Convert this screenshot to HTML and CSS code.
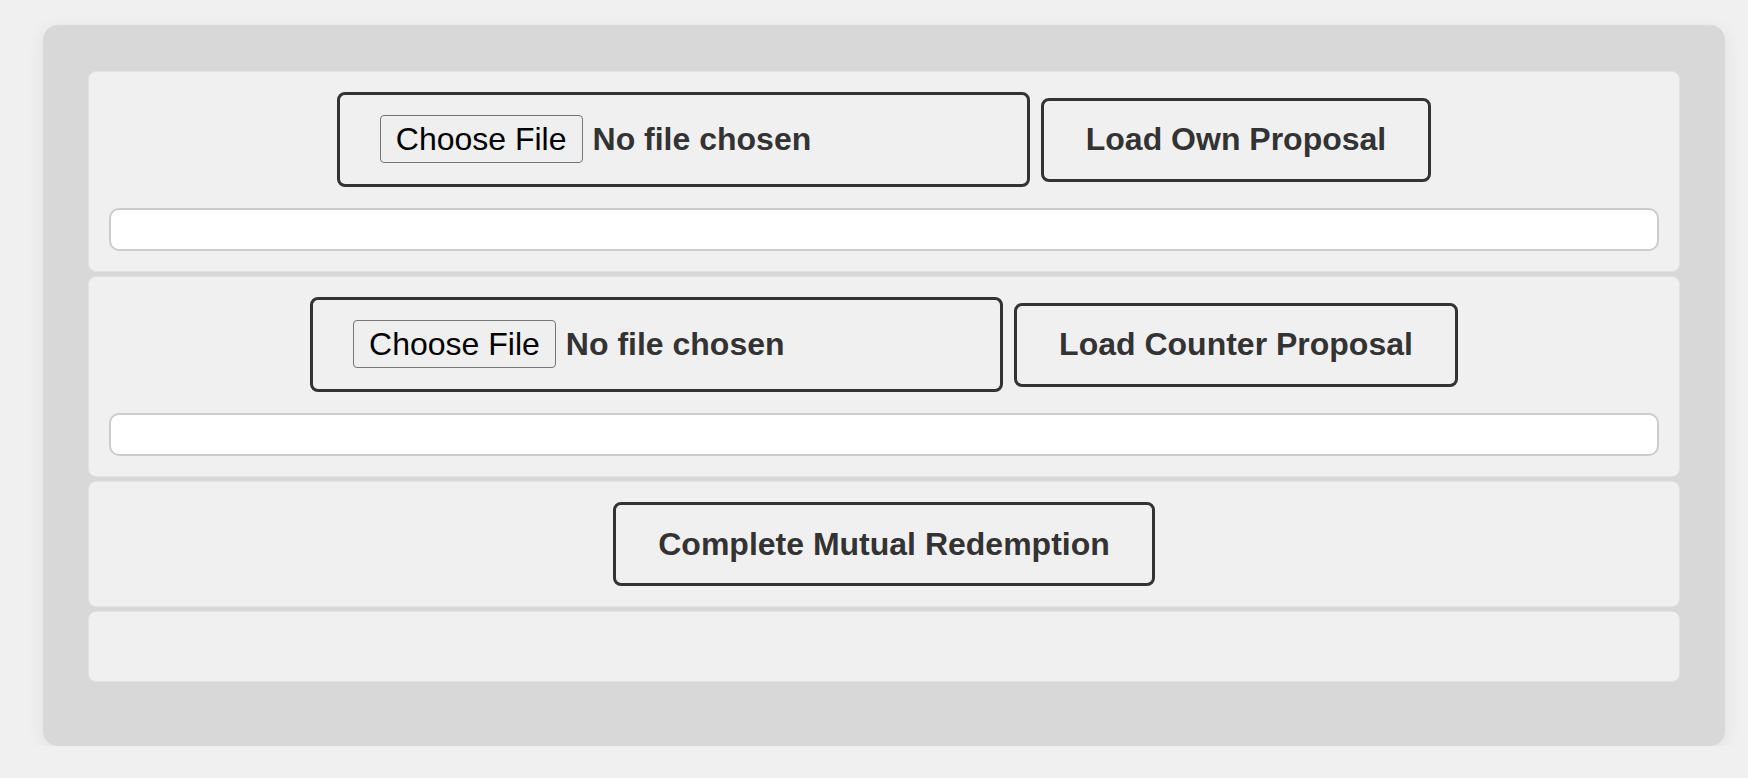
FILE: index.html
```html
<!DOCTYPE html>
<html lang="en">
<head>
<meta charset="utf-8">
<title>Mutual Redemption</title>
<link rel="stylesheet" href="styles.css">
</head>
<body>
<div class="panel">
  <section class="card">
    <div class="row">
      <input type="file" class="file-box">
      <button class="action">Load Own Proposal</button>
    </div>
    <input type="text" class="field">
  </section>
  <section class="card">
    <div class="row">
      <input type="file" class="file-box">
      <button class="action">Load Counter Proposal</button>
    </div>
    <input type="text" class="field">
  </section>
  <section class="card">
    <div class="row single">
      <button class="action">Complete Mutual Redemption</button>
    </div>
  </section>
  <section class="card status"></section>
</div>
</body>
</html>
```
FILE: styles.css
```css
html, body {
  margin: 0;
  padding: 0;
  background: #f0f0f0;
  font-family: "Liberation Sans", Arial, sans-serif;
  color: #333;
}

.panel {
  box-sizing: border-box;
  margin: 25px 0 0 43px;
  width: 1682px;
  height: 721px;
  background: #d8d8d8;
  border-radius: 15px;
  padding: 46px 45px 64px;
  box-shadow: 0 4px 18px rgba(0, 0, 0, 0.07);
  display: flex;
  flex-direction: column;
  gap: 4px;
}

.card {
  background: #f0f0f0;
  border: 1px solid #e2e2e2;
  border-radius: 8px;
  padding: 20px;
  display: flex;
  flex-direction: column;
}

.row {
  display: flex;
  justify-content: center;
  align-items: center;
  gap: 11px;
  margin-bottom: 21px;
}

.row.single {
  margin-bottom: 0;
}

.file-box {
  box-sizing: border-box;
  width: 693px;
  height: 95px;
  border: 3px solid #333;
  border-radius: 8px;
  padding: 20px 40px;
  background: transparent;
  font-family: "Liberation Sans", Arial, sans-serif;
  font-size: 32px;
  font-weight: bold;
  color: #333;
}

.file-box::file-selector-button {
  font-family: "Liberation Sans", Arial, sans-serif;
  font-size: 32px;
  font-weight: normal;
  color: #000;
  background: #efefef;
  border: 1px solid #767676;
  border-radius: 4px;
  height: 48px;
  padding: 0 15px;
  margin-right: 10px;
}

.action {
  box-sizing: border-box;
  height: 84px;
  padding: 0 42px;
  border: 3px solid #333;
  border-radius: 8px;
  background: #f0f0f0;
  color: #333;
  font-family: "Liberation Sans", Arial, sans-serif;
  font-size: 32px;
  font-weight: bold;
}

.field {
  box-sizing: border-box;
  width: 100%;
  height: 43px;
  border: 2px solid #ccc;
  border-radius: 10px;
  background: #fff;
  margin: 0;
}

.status {
  height: 72px;
  box-sizing: border-box;
}
```
